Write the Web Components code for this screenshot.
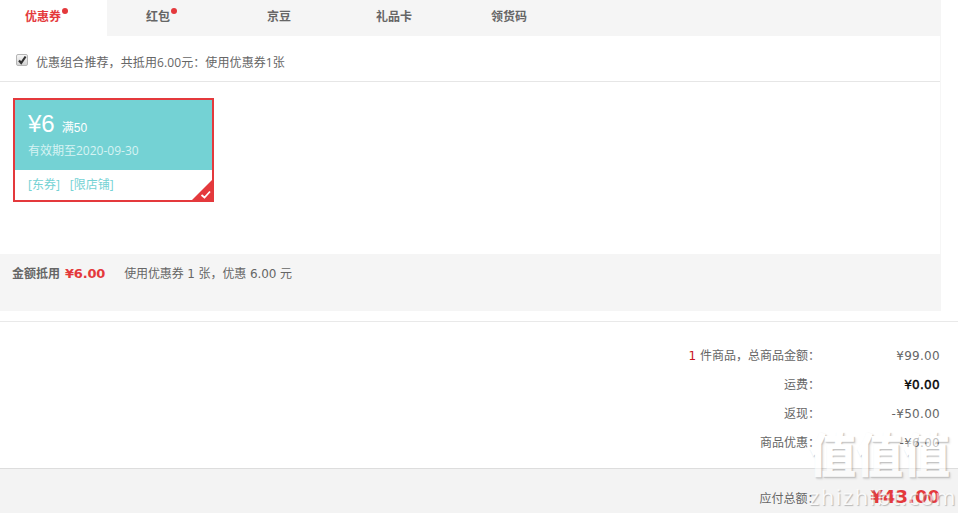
<!DOCTYPE html>
<html lang="zh">
<head>
<meta charset="utf-8">
<title>结算</title>
<style>
html, body { margin: 0; padding: 0; background: #fff; }
body {
    font: 12px "DejaVu Sans", "Noto Sans CJK SC", sans-serif;
    color: #666;
    height: 513px;
    overflow: hidden;
    position: relative;
}
</style>
</head>
<body>
<pay-tabs>
    <pay-tab active dot width="107">优惠券</pay-tab>
    <pay-tab dot width="107">红包</pay-tab>
    <pay-tab width="95">京豆</pay-tab>
    <pay-tab width="101">礼品卡</pay-tab>
    <pay-tab width="90">领货码</pay-tab>
</pay-tabs>
<coupon-panel hint="优惠组合推荐，共抵用6.00元：使用优惠券1张">
    <coupon-card amount="6" limit="满50" expire="有效期至2020-09-30"><span>[东券]</span><span>[限店铺]</span></coupon-card>
</coupon-panel>
<amount-bar price="¥6.00">使用优惠券 1 张，优惠 6.00 元</amount-bar>
<order-summary>
    <summary-row value="¥99.00"><span style="color:#c81623">1</span> 件商品，总商品金额：</summary-row>
    <summary-row value="¥0.00" strong>运费：</summary-row>
    <summary-row value="-¥50.00">返现：</summary-row>
    <summary-row value="-¥6.00">商品优惠：</summary-row>
</order-summary>
<total-bar price="¥43.00">应付总额：</total-bar>
<site-mark></site-mark>

<script>
class PayTabs extends HTMLElement {
    constructor() {
        super();
        this.attachShadow({mode: 'open'}).innerHTML = `
            <style>
            :host { display: flex; gap: 14px; width: 941px; height: 36px; background: #f5f5f5; }
            </style>
            <slot></slot>`;
    }
}

class PayTab extends HTMLElement {
    constructor() {
        super();
        this.attachShadow({mode: 'open'}).innerHTML = `
            <style>
            :host { display: block; box-sizing: border-box; padding-left: 25px; line-height: 35px; font-weight: bold; color: #666; }
            :host([active]) { background: #fff; color: #e4393c; }
            .label { position: relative; display: inline-block; }
            .dot { position: absolute; right: -7px; top: 8px; width: 6px; height: 6px; border-radius: 50%; background: #e4393c; }
            </style>
            <span class="label"><slot></slot><span class="dot" hidden></span></span>`;
    }

    connectedCallback() {
        this.style.width = this.getAttribute('width') + 'px';
        this.shadowRoot.querySelector('.dot').hidden = !this.hasAttribute('dot');
    }
}

class CouponPanel extends HTMLElement {
    constructor() {
        super();
        this.attachShadow({mode: 'open'}).innerHTML = `
            <style>
            :host { display: block; box-sizing: border-box; width: 941px; height: 218px; border-right: 1px solid #f6f6f6; }
            .hint { display: flex; align-items: center; box-sizing: border-box; height: 46px; padding: 7px 0 0 16px; border-bottom: 1px solid #e6e6e6; color: #666; font-family: "Open Sans", "Noto Sans CJK SC", sans-serif; letter-spacing: .1px; }
            .box { width: 12px; height: 12px; margin: -4px 8px 0 0; border: 1px solid #b5b5b5; border-radius: 2px; background: linear-gradient(#f6f6f6, #d4d4d4); box-sizing: border-box; display: flex; }
            .list { padding: 16px 13px; }
            </style>
            <div class="hint">
                <span class="box"><svg width="12" height="12" viewBox="0 0 12 12" style="margin:-1px"><path d="M3 6.5 L5.2 9 L9.6 2.5" fill="none" stroke="#333" stroke-width="2.2"/></svg></span>
                <span class="text"></span>
            </div>
            <div class="list"><slot></slot></div>`;
    }

    connectedCallback() {
        this.shadowRoot.querySelector('.text').textContent = this.getAttribute('hint');
    }
}

class CouponCard extends HTMLElement {
    constructor() {
        super();
        this.attachShadow({mode: 'open'}).innerHTML = `
            <style>
            :host { display: block; position: relative; box-sizing: border-box; width: 201px; height: 104px; border: 2px solid #e4393c; font-family: "Open Sans", "Noto Sans CJK SC", sans-serif; }
            .top { height: 70px; box-sizing: border-box; padding: 8px 13px 0; background: #74d2d4; color: #fff; }
            .price { display: flex; align-items: baseline; height: 35px; font-family: "Liberation Sans", "Noto Sans CJK SC", sans-serif; }
            .amount { font-size: 24px; line-height: 32px; }
            .limit { font-size: 12px; margin-left: 7px; }
            .date { line-height: 16px; color: #d6f3f3; }
            .tags { display: flex; gap: 10px; padding: 7px 13px 0; line-height: 16px; color: #74d2d4; }
            svg { position: absolute; right: 0; bottom: 0; }
            </style>
            <div class="top">
                <div class="price"><span class="amount"></span><span class="limit"></span></div>
                <div class="date"></div>
            </div>
            <div class="tags"><slot></slot></div>
            <svg width="20" height="20" viewBox="0 0 20 20"><path d="M20 0V20H0Z" fill="#e4393c"/><path d="M9.5 15 L12.5 17.5 L18 11.5" fill="none" stroke="#fff" stroke-width="1.8"/></svg>`;
    }

    connectedCallback() {
        const root = this.shadowRoot;
        root.querySelector('.amount').textContent = '¥' + this.getAttribute('amount');
        root.querySelector('.limit').textContent = this.getAttribute('limit');
        root.querySelector('.date').textContent = this.getAttribute('expire');
    }
}

class AmountBar extends HTMLElement {
    constructor() {
        super();
        this.attachShadow({mode: 'open'}).innerHTML = `
            <style>
            :host { display: flex; align-items: baseline; box-sizing: border-box; width: 941px; height: 57px; padding: 11px 0 0 12px; background: #f5f5f5; line-height: 18px; letter-spacing: -.1px; }
            b { color: #666; letter-spacing: 0; }
            .price { margin: 0 19px 0 5px; font-size: 13px; font-weight: bold; color: #e4393c; letter-spacing: -.2px; }
            </style>
            <b>金额抵用</b><span class="price"></span><slot></slot>`;
    }

    connectedCallback() {
        this.shadowRoot.querySelector('.price').textContent = this.getAttribute('price');
    }
}

class OrderSummary extends HTMLElement {
    constructor() {
        super();
        this.attachShadow({mode: 'open'}).innerHTML = `
            <style>
            :host { display: block; margin-top: 10px; height: 147px; box-sizing: border-box; padding-top: 20px; border-top: 1px solid #e9e9e9; }
            </style>
            <slot></slot>`;
    }
}

class SummaryRow extends HTMLElement {
    constructor() {
        super();
        this.attachShadow({mode: 'open'}).innerHTML = `
            <style>
            :host { display: flex; justify-content: flex-end; height: 29px; line-height: 29px; padding-right: 18px; }
            .value { width: 120px; text-align: right; letter-spacing: .3px; }
            :host([strong]) .value { color: #000; -webkit-text-stroke: .4px #000; }
            </style>
            <span><slot></slot></span><span class="value"></span>`;
    }

    connectedCallback() {
        this.shadowRoot.querySelector('.value').textContent = this.getAttribute('value');
    }
}

class TotalBar extends HTMLElement {
    constructor() {
        super();
        this.attachShadow({mode: 'open'}).innerHTML = `
            <style>
            :host { display: flex; justify-content: flex-end; align-items: baseline; box-sizing: border-box; height: 45px; padding: 17px 18px 0 0; background: #f3f3f3; border-top: 1px solid #ddd; }
            .price { margin-left: 51px; font-size: 18px; font-weight: bold; color: #e4393c; }
            </style>
            <slot></slot><span class="price"></span>`;
    }

    connectedCallback() {
        this.shadowRoot.querySelector('.price').textContent = this.getAttribute('price');
    }
}

// watermark over the bottom right corner
class SiteMark extends HTMLElement {
    constructor() {
        super();
        this.attachShadow({mode: 'open'}).innerHTML = `
            <style>
            :host { position: absolute; left: 809px; top: 419px; width: 149px; color: #fff; pointer-events: none; }
            .big { font: 900 47px/66px "Noto Sans CJK SC", sans-serif; white-space: nowrap; opacity: .6; text-shadow: 1px 1px 1px #999, 2px 2px 2px rgba(0,0,0,.15); }
            .url { font: 22px/24px "Open Sans", sans-serif; letter-spacing: 1.5px; white-space: nowrap; opacity: .55; margin-top: -1px; text-shadow: 1px 1px 1px #888; }
            </style>
            <div class="big">值值值</div>
            <div class="url">zhizhibt.com</div>`;
    }
}

customElements.define('pay-tabs', PayTabs);
customElements.define('pay-tab', PayTab);
customElements.define('coupon-panel', CouponPanel);
customElements.define('coupon-card', CouponCard);
customElements.define('amount-bar', AmountBar);
customElements.define('order-summary', OrderSummary);
customElements.define('summary-row', SummaryRow);
customElements.define('total-bar', TotalBar);
customElements.define('site-mark', SiteMark);
</script>
</body>
</html>
